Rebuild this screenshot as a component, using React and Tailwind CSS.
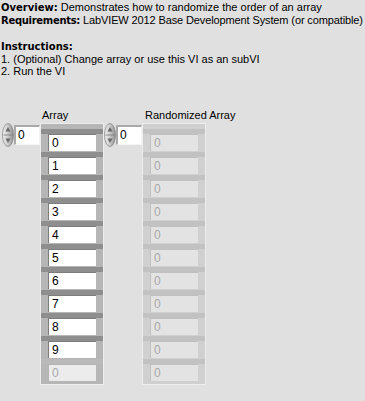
import React from 'react';

const font = { fontFamily: '"Liberation Sans", Arial, sans-serif' };
const boldFont = { fontFamily: '"DejaVu Sans", Verdana, sans-serif' };

function Spinner() {
  return (
    <svg width="12" height="24" viewBox="0 0 12 24" className="shrink-0">
      <defs>
        <linearGradient id="sp" x1="0" y1="0" x2="1" y2="0">
          <stop offset="0" stopColor="#f2f2f2" />
          <stop offset="0.5" stopColor="#c9c9c9" />
          <stop offset="1" stopColor="#8e8e8e" />
        </linearGradient>
      </defs>
      <ellipse cx="6" cy="12" rx="5.5" ry="11.5" fill="url(#sp)" stroke="#8a8a8a" strokeWidth="0.8" />
      <line x1="1.5" y1="12" x2="10.5" y2="12" stroke="#7a7a7a" strokeWidth="0.8" />
      <path d="M6 4 L8.5 8.5 L3.5 8.5 Z" fill="#6a6a6a" />
      <path d="M6 20 L8.5 15.5 L3.5 15.5 Z" fill="#6a6a6a" />
    </svg>
  );
}

function IndexControl() {
  return (
    <div className="flex items-center h-[24px]">
      <Spinner />
      <div className="w-[26px] h-[20px] bg-white border-t-2 border-l-2 border-[#a9a9a9] border-r border-b border-r-[#f4f4f4] border-b-[#f4f4f4] text-[12px] leading-[16px] pl-[2px] text-black">
        0
      </div>
    </div>
  );
}

function Cell({ value, kind }) {
  // kind: 'on' | 'off' | 'dim'
  const band = kind === 'on' ? 'border-t-[#8e8e8e]' : kind === 'off' ? 'border-t-[#b9b9b9]' : 'border-t-[#c2c2c2]';
  const box =
    kind === 'on'
      ? 'bg-white border-[#7d7d7d] text-black'
      : kind === 'off'
      ? 'bg-[#ececec] border-[#b3b3b3] text-[#a9a9a9]'
      : 'bg-[#e3e3e3] border-[#c0c0c0] text-[#a9a9a9]';
  return (
    <div className={`h-[23px] border-t-[5px] ${band} px-[7px] pb-[1px]`}>
      <div className={`h-[17px] border-t border-l ${box} text-[12px] leading-[16px] pl-[3px]`}>{value}</div>
    </div>
  );
}

function ArrayFrame({ values, dim }) {
  return (
    <div
      className={`w-[64px] border border-[#ededed] pt-[5px] pb-[2px] ${dim ? 'bg-[#d0d0d0]' : 'bg-[#b6b6b6]'}`}
    >
      {values.map((v, i) => (
        <Cell key={i} value={v} kind={dim ? 'dim' : i === values.length - 1 ? 'off' : 'on'} />
      ))}
    </div>
  );
}

export default function App() {
  const input = ['0', '1', '2', '3', '4', '5', '6', '7', '8', '9', '0'];
  const output = Array(11).fill('0');

  return (
    <div className="w-[365px] h-[401px] bg-[#e0e0e0] text-black overflow-hidden" style={font}>
      {/* Description */}
      <div className="pl-[1px] pt-[1px] text-[11px] leading-[12px] whitespace-nowrap">
        <p>
          <span className="font-bold text-[10px]" style={boldFont}>Overview:</span> Demonstrates how to randomize the order of an array
        </p>
        <p>
          <span className="font-bold text-[10px] tracking-[-0.3px]" style={boldFont}>Requirements:</span>
          <span className="tracking-[-0.12px]"> LabVIEW 2012 Base Development System (or compatible)</span>
        </p>
        <p className="mt-[14px] font-bold text-[10px]" style={boldFont}>Instructions:</p>
        <p>1. (Optional) Change array or use this VI as an subVI</p>
        <p>2. Run the VI</p>
      </div>

      {/* Controls */}
      <div className="flex items-start pl-[2px] mt-[32px]">
        <div className="mt-[14px]">
          <IndexControl />
        </div>
        <div>
          <div className="h-[14px] pl-[2px] text-[11px] leading-[12px]">Array</div>
          <ArrayFrame values={input} />
        </div>
        <div className="mt-[14px]">
          <IndexControl />
        </div>
        <div>
          <div className="h-[14px] pl-[3px] text-[11px] leading-[12px] whitespace-nowrap">Randomized Array</div>
          <ArrayFrame values={output} dim />
        </div>
      </div>
    </div>
  );
}
